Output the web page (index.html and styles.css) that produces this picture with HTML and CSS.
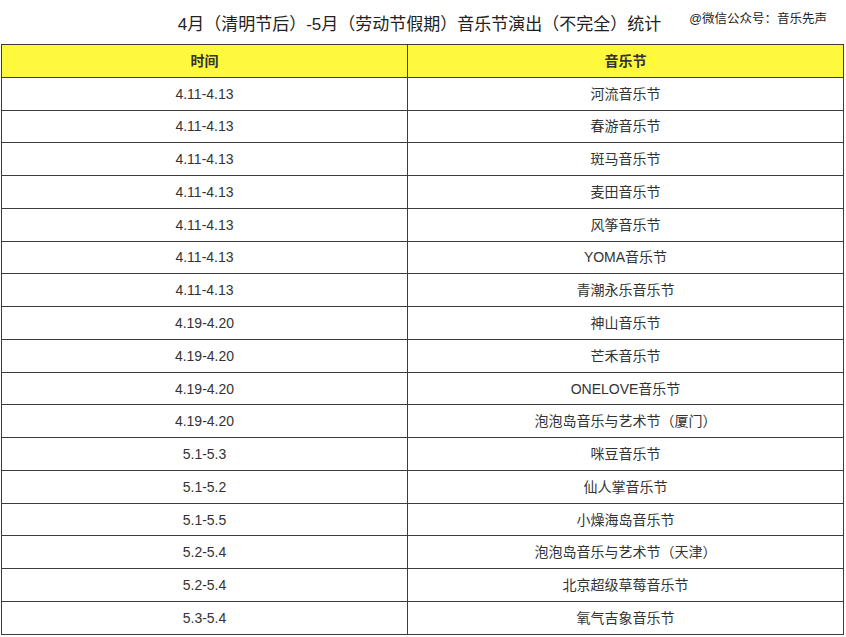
FILE: index.html
```html
<!DOCTYPE html>
<html lang="zh-CN">
<head>
<meta charset="utf-8">
<title>音乐节演出统计</title>
<link rel="stylesheet" href="styles.css">
</head>
<body>
<header class="top">
  <div></div>
  <h1 class="title">4月（清明节后）-5月（劳动节假期）音乐节演出（不完全）统计</h1>
  <div class="mark">@微信公众号：音乐先声</div>
</header>
<table class="tbl">
  <colgroup><col class="c1"><col class="c2"></colgroup>
  <thead>
    <tr><th>时间</th><th>音乐节</th></tr>
  </thead>
  <tbody>
    <tr><td>4.11-4.13</td><td>河流音乐节</td></tr>
    <tr><td>4.11-4.13</td><td>春游音乐节</td></tr>
    <tr><td>4.11-4.13</td><td>斑马音乐节</td></tr>
    <tr><td>4.11-4.13</td><td>麦田音乐节</td></tr>
    <tr><td>4.11-4.13</td><td>风筝音乐节</td></tr>
    <tr><td>4.11-4.13</td><td>YOMA音乐节</td></tr>
    <tr><td>4.11-4.13</td><td>青潮永乐音乐节</td></tr>
    <tr><td>4.19-4.20</td><td>神山音乐节</td></tr>
    <tr><td>4.19-4.20</td><td>芒禾音乐节</td></tr>
    <tr><td>4.19-4.20</td><td>ONELOVE音乐节</td></tr>
    <tr><td>4.19-4.20</td><td>泡泡岛音乐与艺术节（厦门）</td></tr>
    <tr><td>5.1-5.3</td><td>咪豆音乐节</td></tr>
    <tr><td>5.1-5.2</td><td>仙人掌音乐节</td></tr>
    <tr><td>5.1-5.5</td><td>小燥海岛音乐节</td></tr>
    <tr><td>5.2-5.4</td><td>泡泡岛音乐与艺术节（天津）</td></tr>
    <tr><td>5.2-5.4</td><td>北京超级草莓音乐节</td></tr>
    <tr><td>5.3-5.4</td><td>氧气吉象音乐节</td></tr>
  </tbody>
</table>
</body>
</html>
```
FILE: styles.css
```css
html, body {
  margin: 0;
  padding: 0;
  background: #ffffff;
}
body {
  width: 846px;
  font-family: "Liberation Sans", "Noto Sans CJK SC", sans-serif;
  color: #333333;
}
.top {
  display: grid;
  grid-template-columns: 1fr auto 1fr;
  align-items: start;
  height: 44px;
  padding-right: 7px;
}
.title {
  margin: 14px 0 0 0;
  font-size: 17px;
  font-weight: normal;
  line-height: 22px;
  color: #222222;
  white-space: nowrap;
}
.mark {
  margin: 10px 0 0 28px;
  font-size: 12.5px;
  line-height: 18px;
  color: #222222;
  white-space: nowrap;
}
.tbl {
  margin-left: 1px;
  width: 842px;
  border-collapse: collapse;
  table-layout: fixed;
}
.c1 { width: 406px; }
.c2 { width: 436px; }
.tbl th, .tbl td {
  border: 1px solid #3c3c3c;
  height: 32.78px;
  padding: 0;
  box-sizing: border-box;
  text-align: center;
  vertical-align: middle;
  font-size: 14px;
  line-height: 18px;
}
.tbl th {
  background: #fff93e;
  font-weight: bold;
  color: #333333;
}
.tbl td {
  color: #333333;
}
```
